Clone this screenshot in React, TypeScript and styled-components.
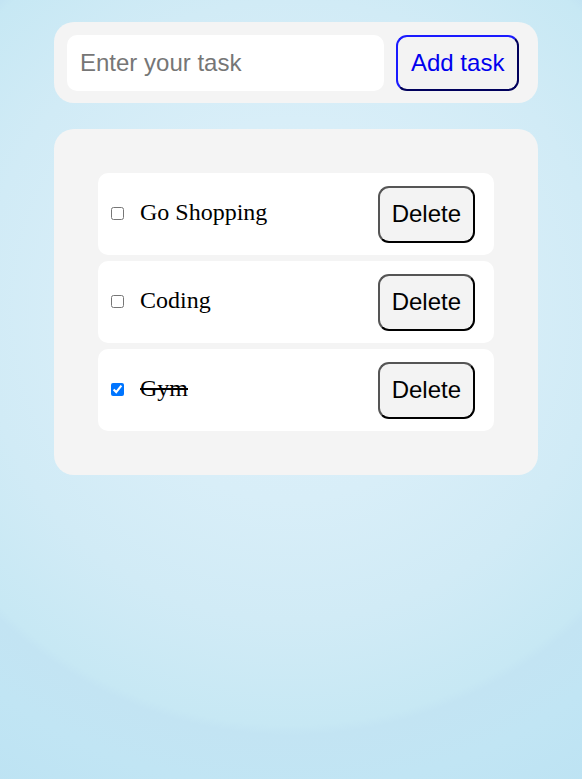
import React, { useState } from "react";
import styled, { createGlobalStyle } from "styled-components";

const Global = createGlobalStyle`
  html {
    min-height: 100%;
    background-color: #bde3f3;
    background-image: radial-gradient(
      circle at 291px 310px,
      #dcf0fa 0px,
      #d8eef8 190px,
      #d1ebf6 310px,
      #c7e8f4 415px,
      #c3e4f3 425px,
      #c1e5f4 480px,
      #bde3f3 560px
    );
    background-repeat: no-repeat;
    background-attachment: fixed;
  }
  body { margin: 0; padding: 0; }
`;

const Page = styled.div`
  padding: 22px 44px 0 54px;
  display: flex;
  flex-direction: column;
  gap: 26px;
  width: 484px;
`;

const FormBar = styled.form`
  display: flex;
  align-items: center;
  background: #f4f4f4;
  border-radius: 20px;
  padding: 13px 19px 12px 13px;
  gap: 12px;
`;

const TaskInput = styled.input`
  width: 317px;
  height: 56px;
  box-sizing: border-box;
  border: none;
  outline: none;
  border-radius: 10px;
  background: #fff;
  padding: 0 13px;
  font-family: "Liberation Sans", Arial, sans-serif;
  font-size: 24px;
  color: #000;
  &::placeholder { color: #767676; }
`;

const ActionButton = styled.button<{ $tone: "blue" | "dark" }>`
  box-sizing: border-box;
  height: ${(p) => (p.$tone === "blue" ? "56px" : "57px")};
  padding: 0 ${(p) => (p.$tone === "blue" ? "13px" : "12px")};
  border-radius: 11px;
  border: 2px outset ${(p) => (p.$tone === "blue" ? "#0000ee" : "#000")};
  border-top-color: ${(p) => (p.$tone === "blue" ? "#1a1aff" : "#555")};
  border-left-color: ${(p) => (p.$tone === "blue" ? "#1a1aff" : "#555")};
  border-right-color: ${(p) => (p.$tone === "blue" ? "#0000b0" : "#000")};
  border-bottom-color: ${(p) => (p.$tone === "blue" ? "#0000b0" : "#000")};
  background: #f3f3f3;
  color: ${(p) => (p.$tone === "blue" ? "#0000ee" : "#000")};
  font-family: "Liberation Sans", Arial, sans-serif;
  font-size: 24px;
  cursor: pointer;
  flex-shrink: 0;
`;

const ListPanel = styled.div`
  background: #f4f4f4;
  border-radius: 20px;
  padding: 44px;
  display: flex;
  flex-direction: column;
  gap: 6px;
`;

const ItemRow = styled.div`
  display: flex;
  align-items: center;
  background: #fff;
  border-radius: 10px;
  height: 82px;
  box-sizing: border-box;
  padding: 0 19px 0 9px;
`;

const Check = styled.input`
  width: 13px;
  height: 13px;
  margin: 3px 3px 3px 4px;
  accent-color: #0075ff;
  position: relative;
  top: -1px;
`;

const Label = styled.span<{ $done: boolean }>`
  flex: 1;
  margin-left: 13px;
  font-family: "Liberation Serif", "Times New Roman", serif;
  font-size: 24px;
  color: #000;
  text-decoration: ${(p) => (p.$done ? "line-through" : "none")};
  position: relative;
  top: -2px;
`;

type Task = { id: number; text: string; done: boolean };

export default function App() {
  const [tasks, setTasks] = useState<Task[]>([
    { id: 1, text: "Go Shopping", done: false },
    { id: 2, text: "Coding", done: false },
    { id: 3, text: "Gym", done: true },
  ]);
  const [value, setValue] = useState("");

  const add = (e: React.FormEvent) => {
    e.preventDefault();
    if (!value.trim()) return;
    setTasks([...tasks, { id: Date.now(), text: value, done: false }]);
    setValue("");
  };

  return (
    <>
      <Global />
      <Page>
        <FormBar onSubmit={add}>
          <TaskInput
            placeholder="Enter your task"
            value={value}
            onChange={(e) => setValue(e.target.value)}
          />
          <ActionButton $tone="blue" type="submit">Add task</ActionButton>
        </FormBar>
        <ListPanel>
          {tasks.map((t) => (
            <ItemRow key={t.id}>
              <Check
                type="checkbox"
                checked={t.done}
                onChange={() =>
                  setTasks(tasks.map((x) => (x.id === t.id ? { ...x, done: !x.done } : x)))
                }
              />
              <Label $done={t.done}>{t.text}</Label>
              <ActionButton
                $tone="dark"
                type="button"
                onClick={() => setTasks(tasks.filter((x) => x.id !== t.id))}
              >
                Delete
              </ActionButton>
            </ItemRow>
          ))}
        </ListPanel>
      </Page>
    </>
  );
}
